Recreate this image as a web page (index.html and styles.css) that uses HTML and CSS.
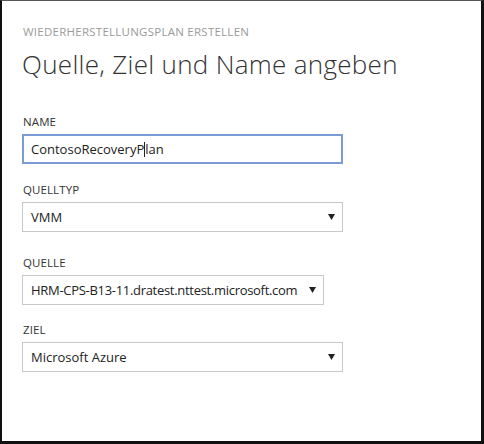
FILE: index.html
```html
<!DOCTYPE html>
<html lang="de">
<head>
<meta charset="utf-8">
<link rel="stylesheet" href="styles.css">
</head>
<body>
<div class="frame">
  <div class="kicker">WIEDERHERSTELLUNGSPLAN ERSTELLEN</div>
  <h1 class="title">Quelle, Ziel und Name angeben</h1>

  <div class="field f-name">
    <div class="label">NAME</div>
    <div class="box input">ContosoRecoveryP<span class="caret"></span>lan</div>
  </div>

  <div class="field f-type">
    <div class="label">QUELLTYP</div>
    <div class="box select"><span>VMM</span><svg class="arrow" width="7" height="6" viewBox="0 0 7 6"><path d="M0 0H7L3.5 6Z" fill="#222"/></svg></div>
  </div>

  <div class="field f-src">
    <div class="label">QUELLE</div>
    <div class="box select narrow"><span class="long">HRM-CPS-B13-11.dratest.nttest.microsoft.com</span><svg class="arrow" width="7" height="6" viewBox="0 0 7 6"><path d="M0 0H7L3.5 6Z" fill="#222"/></svg></div>
  </div>

  <div class="field f-dst">
    <div class="label">ZIEL</div>
    <div class="box select"><span>Microsoft Azure</span><svg class="arrow" width="7" height="6" viewBox="0 0 7 6"><path d="M0 0H7L3.5 6Z" fill="#222"/></svg></div>
  </div>
</div>
</body>
</html>
```
FILE: styles.css
```css
* { box-sizing: border-box; }
html, body { margin: 0; padding: 0; background: #fff; }
body {
  font-family: "Open Sans", "Noto Sans", sans-serif;
  color: #333;
}
.frame {
  width: 484px;
  height: 444px;
  border-left: 2px solid #111;
  border-right: 3px solid #111;
  border-bottom: 3px solid #111;
  border-top: 1px solid #555;
  padding: 24px 0 0 20px;
  background: #fff;
}
.kicker {
  font-size: 11.5px;
  line-height: 14px;
  color: #9a9a9a;
  letter-spacing: 0.25px;
  margin-left: 1px;
}
.title {
  margin: 9px 0 0 0;
  font-size: 26px;
  font-weight: 300;
  line-height: 32px;
  color: #333;
  letter-spacing: 0.3px;
}
.label {
  font-size: 11.5px;
  line-height: 14px;
  color: #333;
  margin-left: 1px;
  letter-spacing: 0.1px;
}
.f-name { margin-top: 35px; }
.f-type { margin-top: 19px; }
.f-src { margin-top: 24px; }
.f-dst { margin-top: 18px; }
.box {
  width: 321px;
  height: 30px;
  margin-top: 5px;
  border: 1px solid #c8c8c8;
  font-size: 13px;
  color: #222;
  padding: 0 0 0 8px;
  display: flex;
  align-items: center;
}
.input {
  border: 2px solid #7b9bd6;
  padding-left: 7px;
}
.select {
  justify-content: space-between;
  padding-right: 7px;
}
.narrow { width: 302px; }
.long { letter-spacing: -0.3px; }
.caret {
  display: inline-block;
  width: 1px;
  height: 15px;
  background: #222;
}
.arrow { display: block; }
```
